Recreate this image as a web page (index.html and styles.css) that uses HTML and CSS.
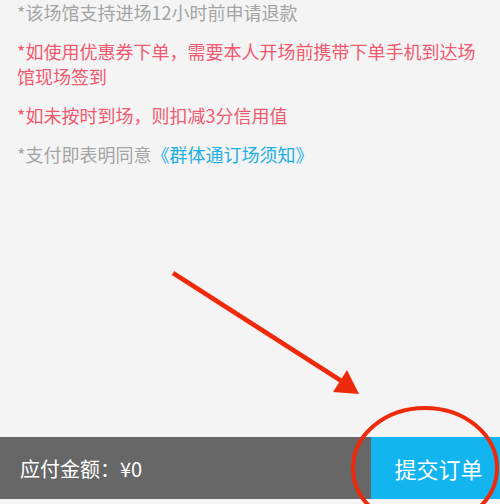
FILE: index.html
```html
<!DOCTYPE html>
<html lang="zh-CN">
<head>
<meta charset="utf-8">
<title>提交订单</title>
<link rel="stylesheet" href="styles.css">
</head>
<body>
<div class="page">
  <div class="notes">
    <p class="note muted">*该场馆支持进场12小时前申请退款</p>
    <p class="note warn">*如使用优惠券下单，需要本人开场前携带下单手机到达场馆现场签到</p>
    <p class="note warn">*如未按时到场，则扣减3分信用值</p>
    <p class="note muted">*支付即表明同意<a class="link">《群体通订场须知》</a></p>
  </div>
  <div class="spacer"></div>
  <div class="paybar">
    <div class="amount">应付金额：¥0</div>
    <div class="submit">提交订单</div>
  </div>
  <div class="footer-strip"></div>
  <svg class="annot" width="500" height="504" viewBox="0 0 500 504">
    <line x1="173" y1="273" x2="343" y2="382" stroke="#ef2a0c" stroke-width="4.5" stroke-linecap="butt"/>
    <polygon points="359,394 333,392 347,370" fill="#ef2a0c"/>
    <ellipse cx="425" cy="468" rx="72" ry="60" fill="none" stroke="#ef2a0c" stroke-width="4"/>
  </svg>
</div>
</body>
</html>
```
FILE: styles.css
```css
html, body {
  margin: 0;
  padding: 0;
}
body {
  background: #f4f4f4;
  font-family: "Noto Sans CJK SC", "Noto Sans", sans-serif;
}
.page {
  position: relative;
  width: 500px;
  height: 504px;
  display: flex;
  flex-direction: column;
  overflow: hidden;
}
.notes {
  padding: 0 17px;
  display: flex;
  flex-direction: column;
  gap: 14px;
}
.note {
  margin: 0;
  font-size: 18px;
  line-height: 25px;
}
.muted {
  color: #a4a4a4;
}
.warn {
  color: #ef5a70;
}
.link {
  color: #1eaee6;
}
.spacer {
  flex: 1;
}
.paybar {
  height: 62px;
  display: flex;
  background: #676767;
}
.amount {
  flex: 1;
  display: flex;
  align-items: center;
  padding-left: 20px;
  color: #ffffff;
  font-size: 20px;
}
.submit {
  width: 129px;
  display: flex;
  align-items: center;
  justify-content: center;
  background: #13b5f0;
  color: #ffffff;
  font-size: 22px;
  padding-left: 6px;
  box-sizing: border-box;
}
.footer-strip {
  height: 5px;
  background: #f4f4f4;
}
.annot {
  position: absolute;
  left: 0;
  top: 0;
  pointer-events: none;
}
```
